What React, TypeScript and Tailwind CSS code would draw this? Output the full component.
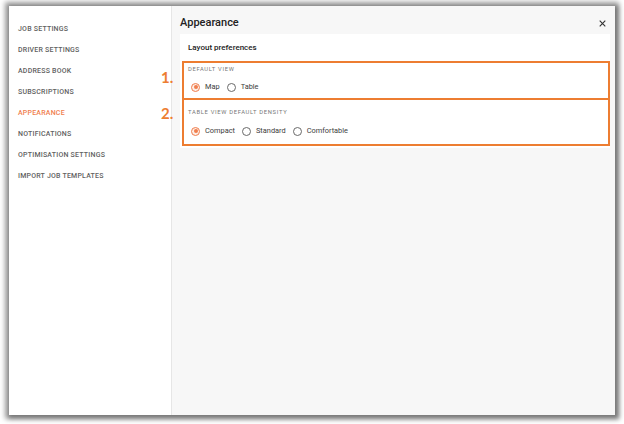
import React from "react";

const navItems = [
  "JOB SETTINGS",
  "DRIVER SETTINGS",
  "ADDRESS BOOK",
  "SUBSCRIPTIONS",
  "APPEARANCE",
  "NOTIFICATIONS",
  "OPTIMISATION SETTINGS",
  "IMPORT JOB TEMPLATES",
];

function Radio({ label, checked }: { label: string; checked?: boolean }) {
  return (
    <div className="flex items-center gap-[5px]">
      {checked ? (
        <div className="w-[9px] h-[9px] rounded-full border border-[#f07e4e] bg-[#fdeee6] flex items-center justify-center">
          <div className="w-[4px] h-[4px] rounded-full bg-[#f07e4e]" />
        </div>
      ) : (
        <div className="w-[9px] h-[9px] rounded-full border border-[#6a6a6a] bg-white" />
      )}
      <span className="text-[7.4px] leading-[12px] text-[#3c3c3c]">{label}</span>
    </div>
  );
}

export default function App() {
  return (
    <div className="w-[624px] h-[424px] bg-white pt-[6px] pl-[9px] overflow-hidden" style={{ fontFamily: "Roboto, 'Liberation Sans', sans-serif" }}>
      <div className="relative w-[606px] h-[409px] flex bg-white shadow-[0_0_5px_4px_rgba(0,0,0,0.38),2px_2px_4px_2px_rgba(0,0,0,0.25)]">
        {/* Sidebar */}
        <div className="w-[163px] h-full border-r border-[#e6e6e6] bg-white pt-[13px] pl-[9px] flex flex-col">
          {navItems.map((item) => (
            <div
              key={item}
              className={`h-[21px] flex items-center text-[7px] font-medium tracking-[0.03em] ${
                item === "APPEARANCE" ? "text-[#f07e4e]" : "text-[#5f5f5f]"
              }`}
            >
              {item}
            </div>
          ))}
        </div>

        {/* Main */}
        <div className="flex-1 h-full bg-[#f7f7f7] pl-[8px] pr-[5px] pt-[11px] flex flex-col">
          <div className="flex items-center justify-between h-[12px] pr-[4px]">
            <span className="text-[11px] font-medium text-[#222]">Appearance</span>
            <svg width="7" height="7" viewBox="0 0 10 10">
              <path d="M1 1L9 9M9 1L1 9" stroke="#333" strokeWidth="1.6" />
            </svg>
          </div>

          <div className="mt-[5px] bg-white pb-[2px] flex flex-col">
            <div className="h-[27px] pl-[8px] pt-[9px]">
              <div className="text-[8px] leading-[10px] font-medium text-[#222]">Layout preferences</div>
            </div>

            <div className="ml-[2px] border-2 border-[#ed7d31] h-[39px] pl-[4px] flex flex-col">
              <div className="mt-[2px] h-[8px] flex items-center text-[5.8px] tracking-[0.12em] text-[#777]">DEFAULT VIEW</div>
              <div className="mt-[8px] h-[12px] pl-[3px] flex items-center gap-[7px]">
                <Radio label="Map" checked />
                <Radio label="Table" />
              </div>
            </div>

            <div className="ml-[2px] border-2 border-t-0 border-[#ed7d31] h-[46px] pl-[4px] flex flex-col">
              <div className="mt-[8px] h-[8px] flex items-center text-[5.8px] tracking-[0.12em] text-[#777]">TABLE VIEW DEFAULT DENSITY</div>
              <div className="mt-[9px] h-[12px] pl-[3px] flex items-center gap-[7px]">
                <Radio label="Compact" checked />
                <Radio label="Standard" />
                <Radio label="Comfortable" />
              </div>
            </div>
          </div>
        </div>

        {/* Annotations */}
        <div className="absolute left-[152px] top-[62px] text-[15px] leading-[18px] font-bold text-[#ed7d31]" style={{ fontFamily: "Lato, 'Open Sans', sans-serif" }}>1.</div>
        <div className="absolute left-[152px] top-[98px] text-[15px] leading-[18px] font-bold text-[#ed7d31]" style={{ fontFamily: "Lato, 'Open Sans', sans-serif" }}>2.</div>
      </div>
    </div>
  );
}
